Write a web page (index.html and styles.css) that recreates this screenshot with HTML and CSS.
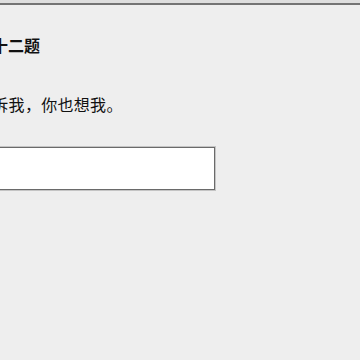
FILE: index.html
```html
<!DOCTYPE html>
<html lang="zh">
<head>
<meta charset="utf-8">
<link rel="stylesheet" href="styles.css">
</head>
<body>
<div class="topbar"></div>
<main class="quiz">
  <h2 class="quiz-title">第十二题</h2>
  <p class="quiz-text">告诉我，你也想我。</p>
  <input class="quiz-input" type="text">
</main>
</body>
</html>
```
FILE: styles.css
```css
html, body {
  margin: 0;
  padding: 0;
  background: #eeeeee;
  overflow: hidden;
}
body {
  width: 360px;
  height: 360px;
  font-family: "Noto Sans CJK SC", "Noto Sans", sans-serif;
  color: #111;
}
.topbar {
  height: 3px;
  background: #dedede;
  border-bottom: 2px solid #747474;
}
.quiz {
  display: flex;
  flex-direction: column;
  align-items: flex-start;
  margin-left: -24px;
  padding-top: 30px;
}
.quiz-title {
  margin: 0;
  font-size: 16px;
  line-height: 20px;
  font-weight: 700;
}
.quiz-text {
  margin: 39px 0 0;
  font-size: 16px;
  line-height: 20px;
  font-weight: 400;
  letter-spacing: 0.3px;
}
.quiz-input {
  margin: 33px 0 0 1px;
  box-sizing: border-box;
  width: 238px;
  height: 43px;
  background: #fff;
  border: 1px solid #6a6a6a;
  box-shadow: 0 0 0 1px #c4c4c4;
  padding: 0 6px;
  outline: none;
}
```
